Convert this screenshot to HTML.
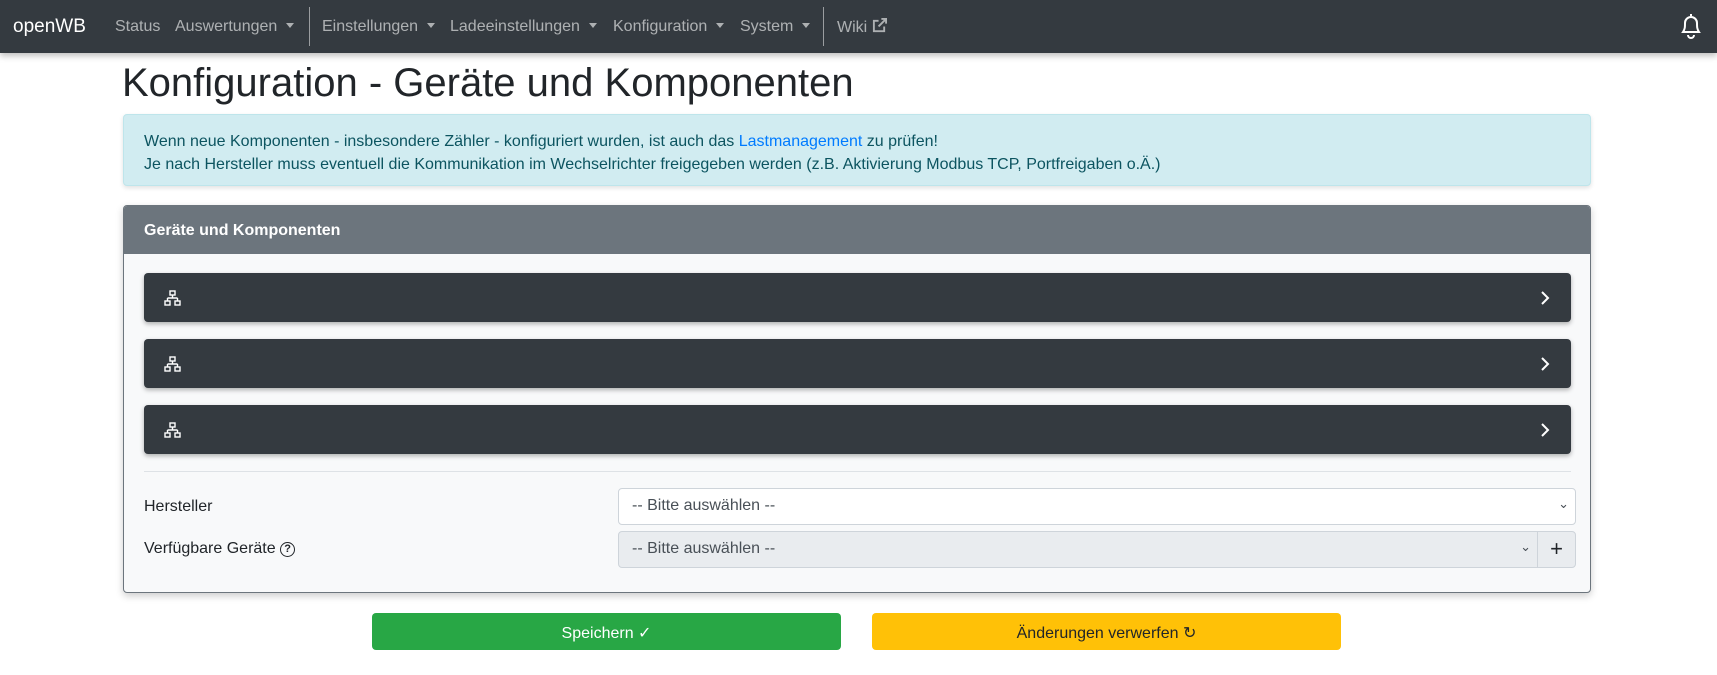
<!DOCTYPE html>
<html><head><meta charset="utf-8"><style>
*{box-sizing:border-box;margin:0;padding:0}
body{width:1717px;height:675px;overflow:hidden;background:#fff;font-family:"Liberation Sans",sans-serif;color:#212529;position:relative}
.nav{position:absolute;left:0;top:0;width:1717px;height:53px;background:#343a40;box-shadow:0 3px 6px rgba(0,0,0,.25)}
.nav span{position:absolute;top:18px;font-size:16px;color:rgba(255,255,255,.6);white-space:nowrap}
.caret::after{content:"";display:inline-block;margin-left:9px;vertical-align:3px;border-top:5px solid rgba(255,255,255,.6);border-left:4px solid transparent;border-right:4px solid transparent}
.sep{position:absolute;top:7px;width:1px;height:39px;background:rgba(255,255,255,.5)}
h1{position:absolute;left:122px;top:61px;font-size:40px;font-weight:400}
.alert{position:absolute;left:123px;top:114px;width:1468px;height:72px;background:#d1ecf1;border:1px solid #bee5eb;border-radius:4px;color:#0c5460;font-size:16px;padding:15px 20px;line-height:23px;box-shadow:0 2px 5px rgba(0,0,0,.12)}
.alert a{color:#007bff}
.card{position:absolute;left:123px;top:205px;width:1468px;height:388px;background:#f8f9fa;border:1px solid #6c757d;border-radius:4px;box-shadow:0 3px 8px rgba(0,0,0,.2);overflow:hidden}
.ch{height:48px;background:#6c757d;color:#fff;font-weight:bold;font-size:16px;padding:16px 20px}
.row{position:absolute;left:20px;width:1427px;height:49px;background:#343a40;border-radius:4px;box-shadow:0 2px 5px rgba(0,0,0,.3)}
.hr{position:absolute;left:20px;width:1427px;top:265px;height:1px;background:#dee2e6}
.lbl{position:absolute;left:20px;font-size:16px}
.sel{position:absolute;left:494px;height:37px;border:1px solid #ced4da;border-radius:4px;font-size:16px;color:#495057;padding:8px 13px}
.btn{position:absolute;top:613px;height:37px;width:469px;border-radius:4px;font-size:16px;text-align:center;padding-top:10px}
</style></head><body>
<div class="nav">
<span style="left:13px;color:#fff;font-size:19px;top:16px">openWB</span>
<span style="left:115px">Status</span>
<span style="left:175px" class="caret">Auswertungen</span>
<div class="sep" style="left:309px"></div>
<span style="left:322px" class="caret">Einstellungen</span>
<span style="left:450px" class="caret">Ladeeinstellungen</span>
<span style="left:613px" class="caret">Konfiguration</span>
<span style="left:740px" class="caret">System</span>
<div class="sep" style="left:823px"></div>
<span style="left:837px">Wiki <svg width="15" height="15" viewBox="0 0 16 16" style="vertical-align:-1px" fill="none" stroke="rgba(255,255,255,.6)" stroke-width="2"><path d="M7 3H2v11h11V9M10 1h5v5M15 1L7 9"/></svg></span>
<svg style="position:absolute;left:1678px;top:12px" width="26" height="28" viewBox="0 0 26 28" fill="none" stroke="#fff" stroke-width="2"><path d="M13 2v2M5 20c2-3 2-5 2-9a6 6 0 0112 0c0 4 0 6 2 9zM10 23a3 3 0 006 0"/></svg>
</div>
<h1>Konfiguration - Geräte und Komponenten</h1>
<div class="alert">Wenn neue Komponenten - insbesondere Zähler - konfiguriert wurden, ist auch das <a>Lastmanagement</a> zu prüfen!<br>Je nach Hersteller muss eventuell die Kommunikation im Wechselrichter freigegeben werden (z.B. Aktivierung Modbus TCP, Portfreigaben o.Ä.)</div>
<div class="card">
<div class="ch">Geräte und Komponenten</div>
<div class="row" style="top:67px"></div>
<div class="row" style="top:133px"></div>
<div class="row" style="top:199px"></div>
<div class="hr"></div>
<div class="lbl" style="top:292px">Hersteller</div>
<div class="lbl" style="top:334px">Verfügbare Geräte <span style="display:inline-block;width:15px;height:15px;border:1.5px solid #212529;border-radius:50%;font-size:11px;text-align:center;line-height:12px;font-weight:bold;vertical-align:1px">?</span></div>
<div class="sel" style="top:282px;width:958px;background:#fff">-- Bitte auswählen --<span style="position:absolute;right:6px;top:7px;font-size:13px">&#8964;</span></div>
<div class="sel" style="top:325px;width:958px;background:#e9ecef">-- Bitte auswählen --<span style="position:absolute;right:44px;top:7px;font-size:13px">&#8964;</span><span style="position:absolute;right:0;top:0;width:38px;height:35px;border-left:1px solid #ced4da;text-align:center;font-size:22px;line-height:33px;color:#212529">+</span></div>
</div>
<svg width="0" height="0" style="position:absolute"><defs><g id="net" fill="none" stroke="#fff" stroke-width="1.4"><rect x="6" y="1" width="5" height="4"/><rect x="1" y="11" width="5" height="4"/><rect x="11" y="11" width="5" height="4"/><path d="M8.5 5v3M3.5 8h10M3.5 8v3M13.5 8v3"/></g><path id="chev" d="M1 1l6 6-6 6" fill="none" stroke="#fff" stroke-width="2"/></defs></svg>
<svg style="position:absolute;left:164px;top:290px" width="18" height="16"><use href="#net"/></svg>
<svg style="position:absolute;left:164px;top:356px" width="18" height="16"><use href="#net"/></svg>
<svg style="position:absolute;left:164px;top:422px" width="18" height="16"><use href="#net"/></svg>
<svg style="position:absolute;left:1541px;top:291px" width="10" height="14"><use href="#chev"/></svg>
<svg style="position:absolute;left:1541px;top:357px" width="10" height="14"><use href="#chev"/></svg>
<svg style="position:absolute;left:1541px;top:423px" width="10" height="14"><use href="#chev"/></svg>
<div class="btn" style="left:372px;background:#28a745;color:#fff">Speichern ✓</div>
<div class="btn" style="left:872px;background:#ffc107;color:#212529">Änderungen verwerfen ↻</div>
</body></html>
